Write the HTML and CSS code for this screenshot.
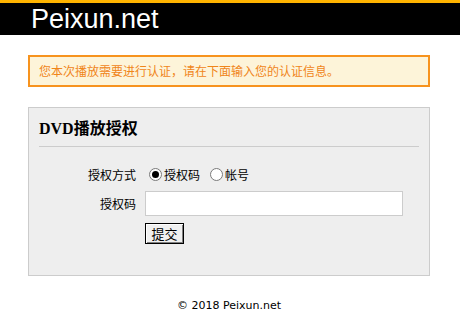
FILE: index.html
```html
<!DOCTYPE html>
<html lang="zh-CN">
<head>
  <meta charset="UTF-8">
  <title>DVD播放授权 - Peixun.net</title>
  <link rel="stylesheet" href="styles.css">
</head>
<body>
  <div class="header">
    <span class="logo">Peixun.net</span>
  </div>

  <div class="wrap">
    <div class="notice">您本次播放需要进行认证，请在下面输入您的认证信息。</div>

    <div class="panel">
      <h2 class="panel-title">DVD播放授权</h2>
      <form class="auth-form" onsubmit="return false">
        <label class="field-label">授权方式</label>
        <div class="radios">
          <label class="radio"><input type="radio" name="mode" checked>授权码</label>
          <label class="radio"><input type="radio" name="mode">帐号</label>
        </div>
        <label class="field-label" for="code">授权码</label>
        <input type="text" id="code" class="code-input">
        <span></span>
        <div><button class="submit-btn" type="submit">提交</button></div>
      </form>
    </div>

    <p class="footer">© 2018 Peixun.net</p>
  </div>
</body>
</html>
```

FILE: styles.css
```css
body {
  margin: 0;
  font-family: "Liberation Sans", "Noto Sans CJK SC", sans-serif;
  font-size: 12px;
  color: #000;
  background: #fff;
}

.header {
  border-top: 3px solid #ffb400;
  background: #000;
  height: 32px;
  padding-left: 31px;
}

.logo {
  color: #fff;
  font-family: "Liberation Sans", Arial, sans-serif;
  font-size: 27px;
  line-height: 33px;
}

.wrap {
  padding: 20px 30px 0 28px;
}

.notice {
  background: #fdf4d9;
  border: 2px solid #f7931e;
  color: #f08519;
  height: 28px;
  line-height: 28px;
  padding-left: 9px;
  font-family: "Noto Sans CJK SC", sans-serif;
}

.panel {
  margin-top: 20px;
  background: #eeeeee;
  border: 1px solid #cccccc;
  height: 167px;
  padding: 0 10px;
}

.panel-title {
  margin: 0;
  padding: 11px 0 8px;
  font-family: "Liberation Serif", "Noto Sans CJK SC", serif;
  font-size: 16px;
  font-weight: bold;
  line-height: 19px;
  border-bottom: 1px solid #cccccc;
}

.auth-form {
  display: grid;
  grid-template-columns: 97px 1fr;
  column-gap: 9px;
  row-gap: 7px;
  align-items: center;
  margin-top: 17px;
}

.field-label {
  text-align: right;
  font-family: "Noto Sans CJK SC", sans-serif;
}

.radios {
  display: flex;
  gap: 6px;
  height: 20px;
  align-items: center;
  font-family: "Noto Sans CJK SC", sans-serif;
}

.radio {
  display: flex;
  align-items: center;
}

.radio input {
  appearance: none;
  width: 13px;
  height: 13px;
  margin: 0 2px 0 4px;
  border: 1px solid #7a7a7a;
  border-radius: 50%;
  background: #fff;
  display: grid;
  place-items: center;
}

.radio input:checked::after {
  content: "";
  width: 7px;
  height: 7px;
  border-radius: 50%;
  background: #000;
}

.code-input {
  width: 258px;
  height: 25px;
  box-sizing: border-box;
  border: 1px solid #cccccc;
  background: #fff;
  margin: 0;
}

.submit-btn {
  width: 39px;
  height: 21px;
  padding: 0;
  border: 1px solid #000;
  background: #f0f0f0;
  box-shadow: inset 1px 1px #fff, inset -1px -1px #808080;
  font-family: "Noto Sans CJK SC", sans-serif;
  font-size: 13px;
  line-height: 18px;
  color: #000;
}

.footer {
  margin: 23px 0 0;
  text-align: center;
  font-family: "DejaVu Sans", Verdana, sans-serif;
  font-size: 11px;
}
```
